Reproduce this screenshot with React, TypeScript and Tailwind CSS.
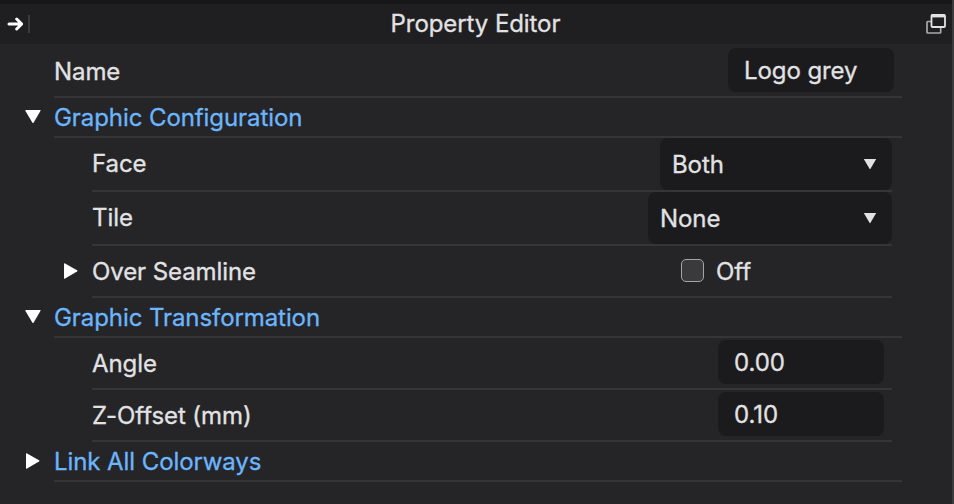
import type { ReactNode } from 'react';

function Caret({ open }: { open: boolean }) {
  return (
    <svg className="block h-4 w-4 shrink-0" viewBox="0 0 16 16" fill="#fff" aria-hidden="true">
      {open ? <path d="M.6 2.2Q0 1 1 1H15Q16 1 15.4 2.1L8.7 13.5Q8 14.6 7.3 13.5Z" /> : <path d="M1 1Q1-.2 2.1.4L14 7.2Q15 7.8 14 8.4L2.1 15.4Q1 16 1 15Z" />}
    </svg>
  );
}

function Section({ title, open }: { title: string; open: boolean }) {
  return (
    <div className="flex h-10 pl-[25px]">
      <div className="mt-[11px] w-[29px]"><Caret open={open} /></div>
      <h2 className="h-10 w-[848px] border-b-2 border-[#353537] pt-1 leading-[32px] text-[#6cb5ff]">{title}</h2>
    </div>
  );
}

function Row({ label, height, labelOffset = '', caret, children }: { label: string; height: string; labelOffset?: string; caret?: boolean; children: ReactNode }) {
  return (
    <div className={`flex pl-[63px] ${height}`}>
      <div className="flex w-[29px] items-center pb-[2px]">{caret && <Caret open={false} />}</div>
      <div className="flex w-[800px] items-center justify-between border-b-2 border-[#353537]">
        <span className={labelOffset}>{label}</span>
        {children}
      </div>
    </div>
  );
}

function Select({ value, width }: { value: string; width: string }) {
  return (
    <button className={`flex h-[52px] items-center justify-between rounded-lg bg-[#1b1b1d] pr-[15px] pl-3 ${width}`}>
      <span className="pt-px">{value}</span>
      <svg className="h-3 w-[14px]" viewBox="0 0 14 12" fill="#e2e2e4" aria-hidden="true">
        <path d="M.8 1H13.2L7.5 10.8Q7 11.5 6.5 10.8Z" />
      </svg>
    </button>
  );
}

function Field({ value, lineHeight = 'leading-[44px]' }: { value: string; lineHeight?: string }) {
  return <div className={`h-11 w-[166px] rounded-lg bg-[#1b1b1d] pl-4 ${lineHeight}`}>{value}</div>;
}

export default function App() {
  return (
    <main className="h-[504px] w-[954px] overflow-hidden border-r-2 border-[#3b3b3d] bg-[#252527] font-[Inter,sans-serif] text-[24px] leading-8 tracking-[-0.08px] whitespace-nowrap text-[#e2e2e4] [-webkit-text-stroke:0.3px]">
      <header className="flex h-11 items-center justify-between border-t-4 border-[#171719] bg-[#1f1f21] pr-[6px] pl-[7px]">
        <div className="flex w-[18px] items-center gap-[5px]">
          <svg className="h-4 w-4 shrink-0" viewBox="0 0 16 16" fill="none" stroke="#fff" strokeWidth="3" strokeLinecap="round" strokeLinejoin="round" aria-hidden="true">
            <path d="M2 8H14M9.7 3L14.7 8L9.7 13" />
          </svg>
          <span className="h-[18px] w-[2px] shrink-0 bg-[#3b3b3d]" />
        </div>
        <h1>Property Editor</h1>
        <svg className="h-5 w-5" viewBox="0 0 20 20" fill="none" aria-hidden="true">
          <path d="M5 7.5H1.7Q1 7.5 1 8.2V18.3Q1 19 1.7 19H14Q14.7 19 14.7 18.3V14" stroke="#aaaaac" strokeWidth="1.7" />
          <rect x="5.5" y="1" width="13.5" height="12" rx="1" stroke="#e2e2e4" strokeWidth="1.8" />
          <path d="M5 2H19" stroke="#e2e2e4" strokeWidth="2.8" />
        </svg>
      </header>
      <div className="ml-[54px] flex h-[54px] w-[848px] items-center justify-between border-b-2 border-[#353537] pr-2">
        <span className="pt-[3px]">Name</span>
        <Field value="Logo grey" lineHeight="leading-[46px]" />
      </div>
      <Section title="Graphic Configuration" open />
      <Row label="Face" height="h-[54px]"><Select value="Both" width="w-[232px]" /></Row>
      <Row label="Tile" height="h-[54px]"><Select value="None" width="w-[244px]" /></Row>
      <Row label="Over Seamline" height="h-[52px]" labelOffset="pt-[2px]" caret>
        <div className="flex w-[212px] items-center gap-3">
          <span className="mb-[2px] ml-px h-[23px] w-[23px] rounded-[5px] border-[1.5px] border-[#a5a5a7] bg-[#3a3a3c]" />
          <span className="pt-[2px]">Off</span>
        </div>
      </Row>
      <Section title="Graphic Transformation" open />
      <Row label="Angle" height="h-[52px]" labelOffset="pt-[2px]"><div className="pr-2 pb-[2px]"><Field value="0.00" lineHeight="leading-[46px]" /></div></Row>
      <Row label="Z-Offset (mm)" height="h-[52px]" labelOffset="pt-[2px]"><div className="pr-2 pb-[2px]"><Field value="0.10" lineHeight="leading-[46px]" /></div></Row>
      <Section title="Link All Colorways" open={false} />
    </main>
  );
}
